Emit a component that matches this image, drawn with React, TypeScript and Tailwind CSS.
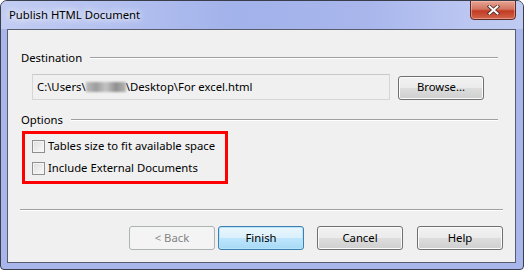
import React from 'react';

const font = { fontFamily: '"Noto Sans", "Open Sans", sans-serif' };

const Btn = ({ label, kind = 'normal' }: { label: string; kind?: 'normal' | 'default' | 'disabled' }) => {
  const cls =
    kind === 'default'
      ? 'border-[#3c7fb1] bg-[linear-gradient(#eaf6fd_0%,#d9f0fc_50%,#bee6fd_50%,#a7d9f5_100%)] text-black shadow-[inset_0_0_0_1px_#b8e4fb]'
      : kind === 'disabled'
      ? 'border-[#adb2b5] bg-[#f4f4f4] text-[#838383]'
      : 'border-[#707070] bg-[linear-gradient(#f2f2f2_0%,#ebebeb_50%,#dddddd_50%,#cfcfcf_100%)] text-black shadow-[inset_0_0_0_1px_#fbfbfb]';
  return (
    <div className={`w-[86px] h-[24px] rounded-[3px] border flex items-center justify-center text-[11.3px] ${cls}`}>
      {label}
    </div>
  );
};

const Check = ({ label }: { label: string }) => (
  <div className="flex items-center h-[22px]">
    <div className="w-[13px] h-[13px] border border-[#8e8f8f] bg-[linear-gradient(135deg,#dcdcdc,#fbfbfb)] shadow-[inset_0_0_0_1px_#f4f4f4]" />
    <span className="ml-[3px] text-[11.3px] text-black whitespace-nowrap">{label}</span>
  </div>
);

const GroupLabel = ({ label }: { label: string }) => (
  <div className="flex items-center ml-[13px] mr-[17px] h-[16px]">
    <span className="text-[11.3px] text-black leading-[16px]">{label}</span>
    <div className="flex-1 ml-[8px] h-[2px] border-t border-t-[#a0a0a0] border-b border-b-white" />
  </div>
);

export default function App() {
  return (
    <div className="w-[524px] h-[270px] bg-white" style={font}>
      <div className="w-[524px] h-[270px] border border-[#3a3d4a] rounded-t-[7px] rounded-b-[4px] bg-[#a9b6ec] flex flex-col overflow-hidden">
        <div className="relative h-[28px] flex items-center pl-[8px] bg-[linear-gradient(90deg,#c3cdf2_0%,#b5c2f0_20%,#a2b2ea_45%,#a8b6ec_70%,#bcc7f1_90%,#c0cbf2_100%)]">
          <span className="text-[11.3px] text-black [text-shadow:0_0_6px_#ffffff,0_0_10px_#ffffff]">Publish HTML Document</span>
          <div className="absolute left-[469px] top-[-1px] w-[46px] h-[20px] rounded-b-[4px] border border-[#5b2a24] bg-[linear-gradient(#e8a493_0%,#d27562_45%,#c23b22_55%,#d0654c_100%)] flex items-center justify-center shadow-[inset_0_0_0_1px_rgba(255,200,190,0.5)]">
            <svg width="13" height="10" viewBox="0 0 13 10">
              <path d="M2.5 1.5 L10.5 8.5 M10.5 1.5 L2.5 8.5" stroke="#4a2a26" strokeWidth="3.6" strokeLinecap="square" />
              <path d="M2.5 1.5 L10.5 8.5 M10.5 1.5 L2.5 8.5" stroke="#ffffff" strokeWidth="2" strokeLinecap="square" />
            </svg>
          </div>
        </div>
        <div className="ml-[6px] mr-[7px] h-[234px] border border-[#585c6c] bg-[#f0f0f0] flex flex-col">
          <div className="mt-[20px]">
            <GroupLabel label="Destination" />
          </div>
          <div className="flex items-center mt-[8px] ml-[24px]">
            <div className="w-[358px] h-[26px] border border-[#d6d6d6] border-t-[#c8c8c8] bg-[#f0f0f0] flex items-center pl-[4px] text-[11.3px] text-black whitespace-nowrap">
              <span>C:\Users\</span>
              <span className="inline-block w-[40px] h-[10px] bg-[linear-gradient(90deg,#bdbdbd,#9c9c9c,#c4c4c4,#8f8f8f,#b5b5b5)] blur-[1px]" />
              <span>\Desktop\For excel.html</span>
            </div>
            <div className="ml-[8px] mt-[1px]">
              <Btn label="Browse..." />
            </div>
          </div>
          <div className="mt-[12px]">
            <GroupLabel label="Options" />
          </div>
          <div className="ml-[14px] mt-[3px] w-[206px] h-[53px] border-[3px] border-[#ff0000] flex flex-col justify-center pl-[7px]">
            <Check label="Tables size to fit available space" />
            <Check label="Include External Documents" />
          </div>
          <div className="ml-[12px] mr-[12px] mt-[25px] h-[2px] border-t border-t-[#a0a0a0] border-b border-b-white" />
          <div className="flex mt-[15px] ml-[121px]">
            <Btn label="< Back" kind="disabled" />
            <div className="ml-[3px]">
              <Btn label="Finish" kind="default" />
            </div>
            <div className="ml-[13px]">
              <Btn label="Cancel" />
            </div>
            <div className="ml-[14px]">
              <Btn label="Help" />
            </div>
          </div>
        </div>
      </div>
    </div>
  );
}
